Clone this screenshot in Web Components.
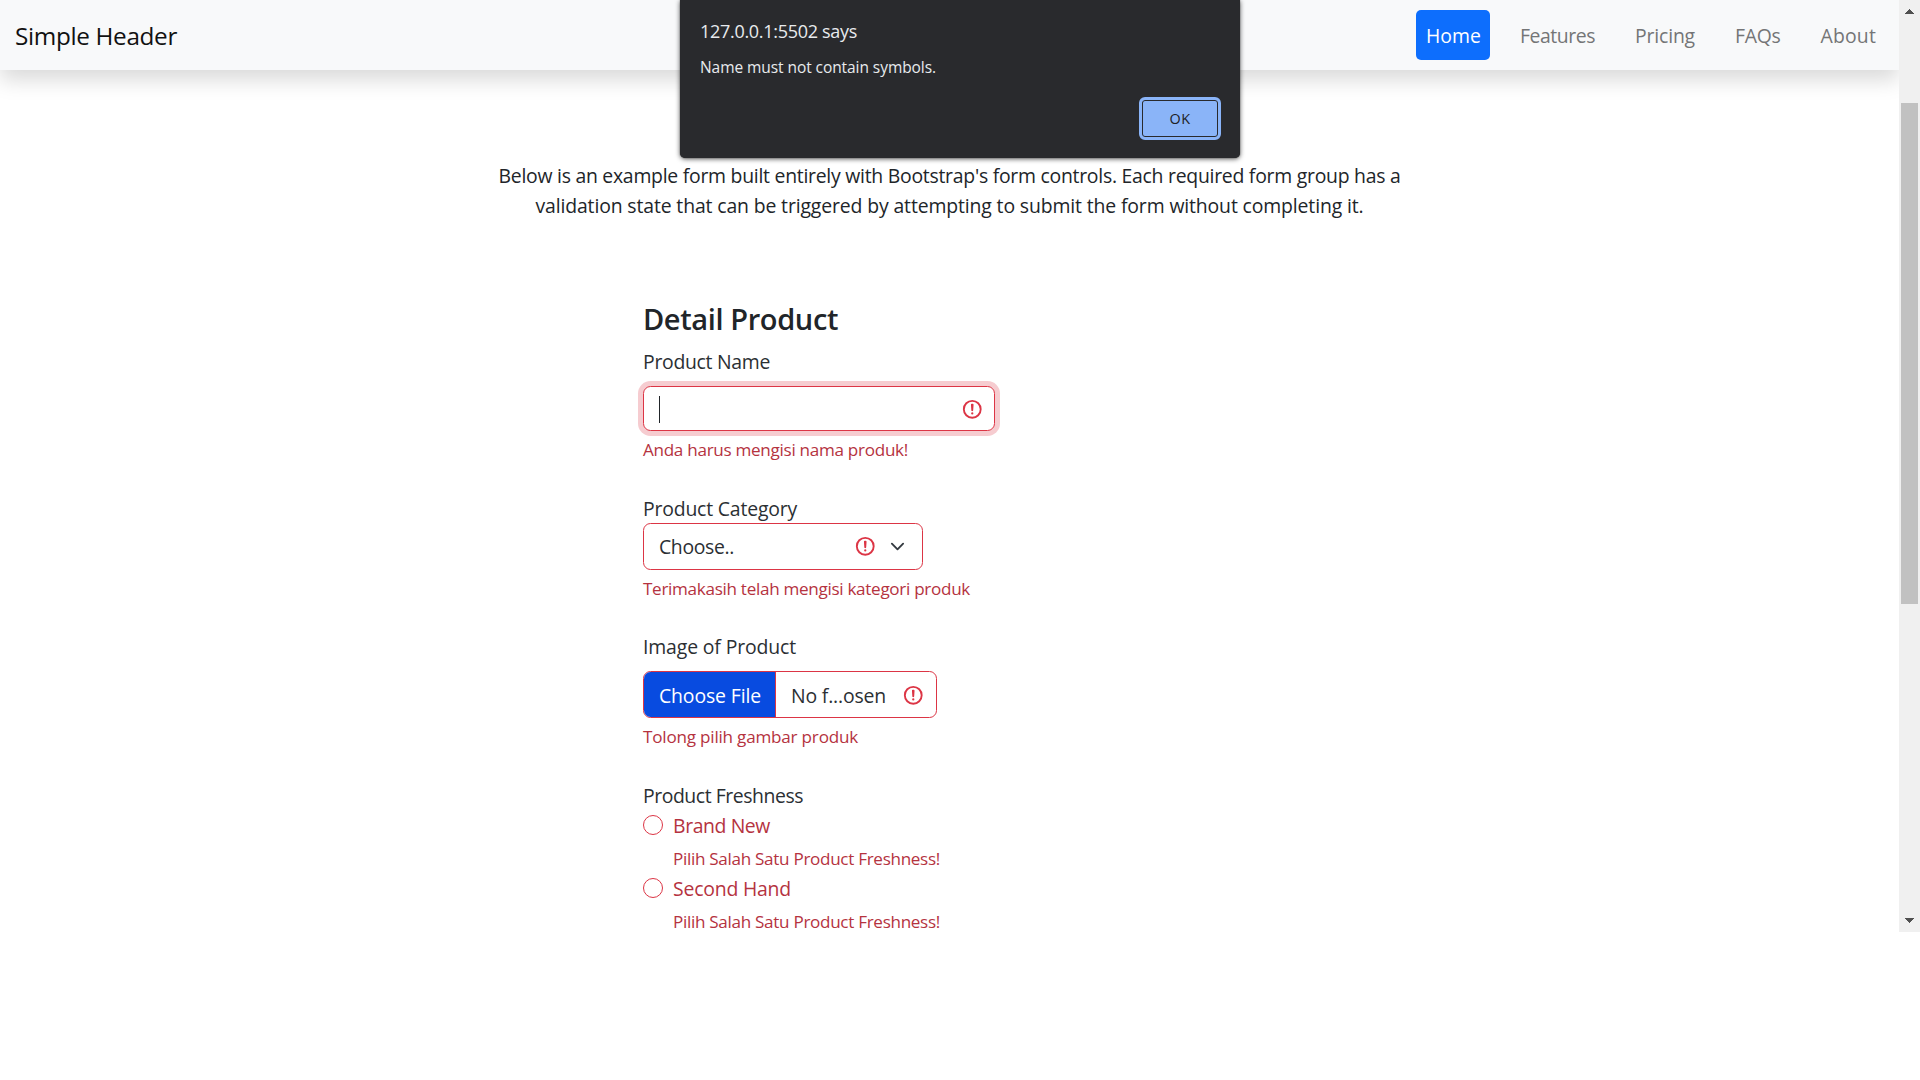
<!DOCTYPE html>
<html lang="en">
<head>
<meta charset="utf-8">
<title>Detail Product</title>
<style>
html,body{margin:0;padding:0;background:#fff;overflow:hidden}
body{font-family:"Open Sans","Noto Sans",sans-serif;font-size:19.4px;color:#212529}
</style>
</head>
<body>
<product-page></product-page>
<script>
const define = (name, html, ready) => customElements.define(name, class extends HTMLElement {
  constructor() {
    super();
    const t = document.createElement('template');
    t.innerHTML = html;
    this.attachShadow({ mode: 'open' }).append(t.content.cloneNode(true));
  }
  connectedCallback() { if (ready) ready.call(this); }
});

define('site-header', `
<style>
:host{display:flex;align-items:center;justify-content:space-between;height:70px;background:#f8f9fa;box-shadow:0 10px 20px rgba(0,0,0,.15);padding:0 23px 0 15px;box-sizing:border-box;position:relative}
nav{display:flex;align-items:center}
.brand{font-size:24.3px;line-height:34px;color:#111;padding-top:2px}
</style>
<div class="brand"><fit-text w="162"><slot name="brand"></slot></fit-text></div>
<nav><slot></slot></nav>`);

define('nav-item', `
<style>
:host{display:block;box-sizing:border-box;height:50px;padding-top:1px;line-height:49px;color:#747576;margin-left:40px}
:host([active]){background:#0d6efd;color:#fff;border-radius:5px;padding:1px 9px 0 10px;margin:0 -10px 0 0;font-weight:500}
</style><slot></slot>`);

define('alert-dialog', `
<style>
:host{position:absolute;left:680px;top:0;width:560px;height:158px;box-sizing:border-box;padding:18px 19px 0 20px;background:#292a2d;border-radius:0 0 5px 5px;color:#e8eaed;box-shadow:0 1px 5px rgba(0,0,0,.65),0 0 1px #333}
.t{font-size:18px;line-height:26px}
.m{font-size:15.5px;line-height:22px;margin-top:12px}
.a{display:flex;justify-content:flex-end;margin-top:19px}
button{font:500 14.4px/20px "Open Sans",sans-serif;box-sizing:border-box;width:82px;height:43px;margin:0;padding:0;border:3px solid #8ab4f8;border-radius:6px;background:#8ab4f8;color:#202124;box-shadow:inset 0 0 0 1px #292a2d}
</style>
<div class="t"><slot name="origin"></slot></div>
<div class="m"><slot></slot></div>
<div class="a"><button><fit-text w="21">OK</fit-text></button></div>`);

define('scroll-bar', `
<style>
:host{display:flex;flex-direction:column;align-items:center;width:21px;height:932px;background:#f0f0f0;box-sizing:border-box;padding:9px 0}
svg{display:block;width:9px;height:5px;fill:#505050;margin-right:1px}
i{display:block;width:17px;height:501px;background:#c1c1c1;margin:89px 0 auto}
</style>
<svg viewBox="0 0 9 5" shape-rendering="crispEdges"><path d="M0 5V4H1V3H2V2H3V1H4V0H5V1H6V2H7V3H8V4H9V5Z"/></svg><i></i>
<svg viewBox="0 0 9 5" shape-rendering="crispEdges"><path d="M0 0H9V1H8V2H7V3H6V4H5V5H4V4H3V3H2V2H1V1H0Z"/></svg>`);

define('invalid-icon', `
<style>:host{display:block;width:22.5px;height:22.5px}svg{display:block;width:100%;height:100%}</style>
<svg viewBox="0 0 12 12" fill="none" stroke="#dc3545"><circle cx="6" cy="6" r="4.5"/><path stroke-linejoin="round" d="M5.8 3.6h.4L6 6.5z"/><circle cx="6" cy="8.2" r=".6" fill="#dc3545" stroke="none"/></svg>`);

define('field-label', `<style>:host{display:block;line-height:28px;color:#2b2f33}</style><slot></slot>`);
define('field-error', `<style>:host{display:block;font-size:17.1px;line-height:26px;color:#b5333f}</style><slot></slot>`);

const box = 'display:flex;align-items:center;box-sizing:border-box;border:1px solid #dc3545;border-radius:7.5px;background:#fff;';
define('name-input', `
<style>:host{${box}width:352px;height:45px;padding:1px 11px 0 15px;justify-content:space-between;box-shadow:0 0 0 5px rgba(220,53,69,.25)}
i{display:block;width:1px;height:27px;background:#212529}</style><i></i><invalid-icon></invalid-icon>`);
define('category-select', `
<style>:host{${box}width:280px;height:47px;padding:0 17px 0 15px;color:#2b2f33}
div{flex:1;line-height:28px;padding-top:1px}
svg{display:block;width:15px;height:15px;margin-left:13.5px}</style>
<div><slot></slot></div><invalid-icon></invalid-icon>
<svg viewBox="0 0 16 16"><path fill="none" stroke="#343a40" stroke-linecap="round" stroke-linejoin="round" stroke-width="2" d="m2 5 6 6 6-6"/></svg>`);
define('file-input', `
<style>:host{${box}width:294px;height:47px;overflow:hidden;padding-right:12px;justify-content:space-between;color:#2b2f33}
.b{align-self:stretch;width:132px;box-sizing:border-box;padding:2px 0 0 15px;background:#084be0;color:#fff;line-height:43px;border-right:1px solid #dc3545;font-weight:500}
.f{flex:1;align-self:stretch;padding:2px 0 0 15px;line-height:43px}
invalid-icon{margin-top:1px}</style>
<div class="b"><slot name="button"></slot></div><div class="f"><slot></slot></div><invalid-icon></invalid-icon>`);
define('radio-option', `
<style>:host{display:flex;align-items:flex-start;gap:10px;line-height:28px;color:#b5333f}
i{display:block;box-sizing:border-box;width:20px;height:20px;border:1px solid #dc3545;border-radius:50%;margin-top:3px}</style><i></i><slot></slot>`);

define('product-form', `
<style>
:host{display:block;width:360px;margin:80px 0 0 643px}
h2{font-size:29px;font-weight:600;line-height:36px;margin:0}
.l1{margin-top:11px}.l2{margin-top:32px}.l3{margin-top:31px}.l4{margin-top:32px}
name-input,file-input{margin-top:10px}
field-error{margin-top:6px}
.in{margin-left:30px}
.r1{margin-top:2px}.r2{margin-top:3px}
</style>
<h2><fit-text w="195">Detail Product</fit-text></h2>
<field-label class="l1"><fit-text w="127">Product Name</fit-text></field-label>
<name-input></name-input>
<field-error><fit-text w="265">Anda harus mengisi nama produk!</fit-text></field-error>
<field-label class="l2"><fit-text w="154">Product Category</fit-text></field-label>
<category-select><fit-text w="75">Choose..</fit-text></category-select>
<field-error><fit-text w="327">Terimakasih telah mengisi kategori produk</fit-text></field-error>
<field-label class="l3"><fit-text w="153">Image of Product</fit-text></field-label>
<file-input><fit-text slot="button" w="102">Choose File</fit-text><fit-text w="95">No f...osen</fit-text></file-input>
<field-error><fit-text w="215">Tolong pilih gambar produk</fit-text></field-error>
<field-label class="l4"><fit-text w="160">Product Freshness</fit-text></field-label>
<radio-option class="r1"><fit-text w="97">Brand New</fit-text></radio-option>
<field-error class="in"><fit-text w="267">Pilih Salah Satu Product Freshness!</fit-text></field-error>
<radio-option class="r2"><fit-text w="118">Second Hand</fit-text></radio-option>
<field-error class="in"><fit-text w="267">Pilih Salah Satu Product Freshness!</fit-text></field-error>`);

define('product-page', `
<style>
:host{display:flex;width:1920px;height:932px;overflow:hidden;position:relative}
main{width:1899px;height:932px;overflow:hidden}
.lead{margin:91px 0 0;text-align:center;line-height:30px}
</style>
<main>
<site-header><span slot="brand">Simple Header</span>
<nav-item active><fit-text w="55">Home</fit-text></nav-item>
<nav-item><fit-text w="75">Features</fit-text></nav-item>
<nav-item><fit-text w="60">Pricing</fit-text></nav-item>
<nav-item><fit-text w="45.5">FAQs</fit-text></nav-item>
<nav-item><fit-text w="55.5">About</fit-text></nav-item>
</site-header>
<div class="lead"><div><fit-text w="902">Below is an example form built entirely with Bootstrap's form controls. Each required form group has a</fit-text></div>
<div><fit-text w="828">validation state that can be triggered by attempting to submit the form without completing it.</fit-text></div></div>
<product-form></product-form>
</main>
<scroll-bar></scroll-bar>
<alert-dialog><fit-text slot="origin" w="157">127.0.0.1:5502 says</fit-text><fit-text w="236">Name must not contain symbols.</fit-text></alert-dialog>`);

// Spreads its line of text over the advance width given in the "w" attribute.
define('fit-text', `<style>:host{display:inline-block;white-space:nowrap;vertical-align:top}</style><slot></slot>`, function () {
  const slot = this.shadowRoot.querySelector('slot');
  const text = slot.assignedNodes({ flatten: true }).map(n => n.textContent).join('').trim();
  const natural = this.getBoundingClientRect().width;
  this.style.letterSpacing = ((+this.getAttribute('w') - natural) / text.length) + 'px';
});
</script>
</body>
</html>
